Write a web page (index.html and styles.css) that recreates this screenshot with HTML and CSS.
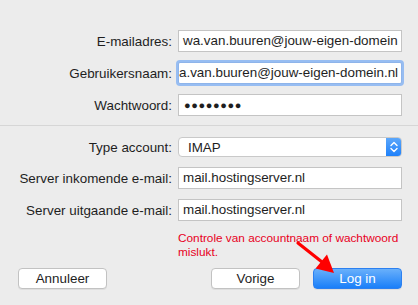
FILE: index.html
```html
<!DOCTYPE html>
<html lang="nl">
<head>
    <meta charset="UTF-8">
    <meta name="viewport" content="width=device-width, initial-scale=1.0">
    <title>Account toevoegen</title>
    <link rel="stylesheet" href="styles.css">
</head>
<body>
    <div class="sheet">
        <div class="section top">
            <label class="label">E-mailadres:</label>
            <div class="field">wa.van.buuren@jouw-eigen-domein</div>

            <label class="label">Gebruikersnaam:</label>
            <div class="field focused"><span>a.van.buuren@jouw-eigen-domein.nl</span><span class="caret"></span></div>

            <label class="label">Wachtwoord:</label>
            <div class="field dots">&#9679;&#9679;&#9679;&#9679;&#9679;&#9679;&#9679;&#9679;</div>
        </div>

        <div class="divider"></div>

        <div class="section bottom">
            <label class="label">Type account:</label>
            <div class="select">
                <span class="select-value">IMAP</span>
                <span class="stepper">
                    <svg width="8" height="12" viewBox="0 0 8 12">
                        <path d="M1 4.5 L4 1.5 L7 4.5 M1 7.5 L4 10.5 L7 7.5" fill="none" stroke="#fff" stroke-width="1.4" stroke-linecap="round" stroke-linejoin="round"/>
                    </svg>
                </span>
            </div>

            <label class="label">Server inkomende e-mail:</label>
            <div class="field">mail.hostingserver.nl</div>

            <label class="label">Server uitgaande e-mail:</label>
            <div class="field">mail.hostingserver.nl</div>

            <div></div>
            <p class="error">Controle van accountnaam of wachtwoord<br>mislukt.</p>
        </div>

        <div class="buttons">
            <button class="btn cancel">Annuleer</button>
            <div class="right-buttons">
                <button class="btn">Vorige</button>
                <button class="btn primary">Log in</button>
            </div>
        </div>
    </div>

    <!-- red annotation arrow over the dialog -->
    <svg class="arrow" width="418" height="305" viewBox="0 0 418 305">
        <line x1="298" y1="243" x2="322" y2="262" stroke="#ff0000" stroke-width="3.2" stroke-linecap="round"/>
        <polygon points="334,273 315.5,268.5 327,254.5" fill="#ff0000"/>
    </svg>
</body>
</html>
```

FILE: styles.css
```css
* {
    margin: 0;
    padding: 0;
    box-sizing: border-box;
}

body {
    font-family: 'Liberation Sans', Arial, sans-serif;
    font-size: 13.4px;
    color: #1e1e1e;
    background: #ececec;
    width: 418px;
    height: 305px;
    overflow: hidden;
    position: relative;
}

.sheet {
    padding-top: 30px;
}

.section {
    display: grid;
    grid-template-columns: 172px 224px;
    column-gap: 6px;
    row-gap: 10px;
}

.bottom {
    padding-top: 11px;
}

.label {
    text-align: right;
    align-self: center;
    white-space: nowrap;
}

.field {
    height: 22px;
    background: #fff;
    border: 1px solid #c4c4c4;
    padding: 0 4px;
    line-height: 20px;
    white-space: nowrap;
    overflow: hidden;
}

.field.focused {
    border-color: #8eb4ea;
    box-shadow: 0 0 0 2px #97bdf2;
    border-radius: 2px;
    padding-left: 0;
    display: flex;
    align-items: center;
}

.caret {
    display: inline-block;
    width: 1px;
    height: 15px;
    background: #000;
    margin-left: 1px;
}

.field.dots {
    font-size: 11px;
    letter-spacing: 0.6px;
    padding-left: 5px;
}

.divider {
    margin-top: 9px;
    border-top: 1px solid #d6d6d6;
}

.select {
    height: 20px;
    background: #fff;
    border: 1px solid #c9c9c9;
    border-radius: 4px;
    display: flex;
    align-items: center;
    overflow: hidden;
}

.select-value {
    flex: 1;
    padding-left: 9px;
}

.stepper {
    width: 16px;
    height: 20px;
    margin-right: -1px;
    background: linear-gradient(#5fa9fb, #1c7ffa);
    display: flex;
    align-items: center;
    justify-content: center;
}

.error {
    color: #e8001c;
    font-size: 11.8px;
    line-height: 14px;
    white-space: nowrap;
}

.buttons {
    display: flex;
    justify-content: space-between;
    padding: 9px 16px 0 18px;
}

.right-buttons {
    display: flex;
    gap: 13px;
}

.btn {
    font-family: inherit;
    font-size: 13.4px;
    color: #1e1e1e;
    width: 89px;
    height: 21px;
    background: #fff;
    border: 1px solid #c2c2c2;
    border-radius: 4px;
    box-shadow: 0 1px 0 rgba(0, 0, 0, 0.06);
}

.btn.primary {
    color: #fff;
    border-color: #2c80f0;
    background: linear-gradient(#69b0fb, #1a7ff9);
}

.arrow {
    position: absolute;
    left: 0;
    top: 0;
    pointer-events: none;
}
```
